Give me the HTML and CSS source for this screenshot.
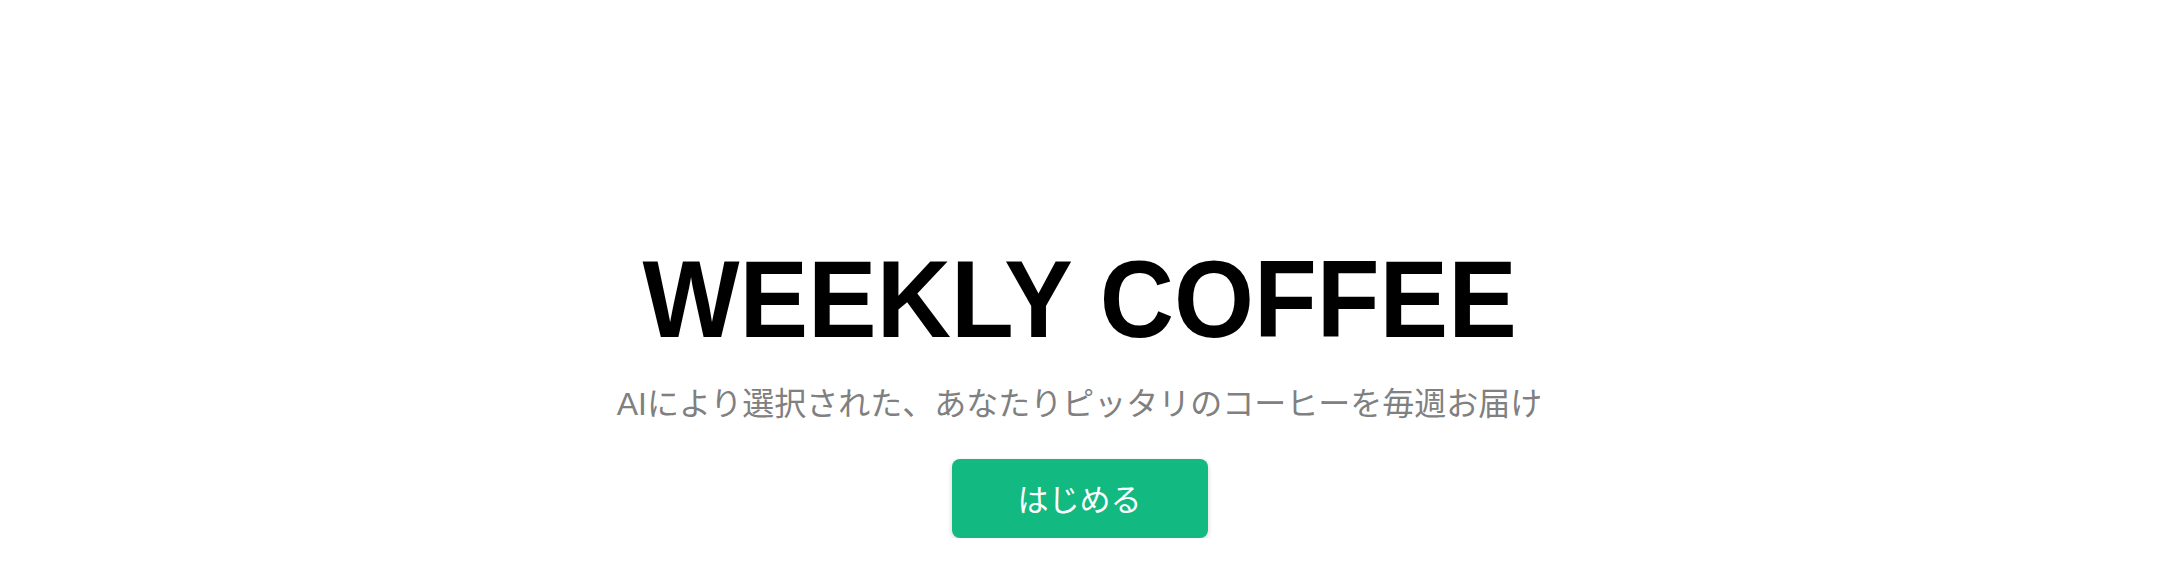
FILE: index.html
```html
<!DOCTYPE html>
<html lang="ja">
<head>
<meta charset="utf-8">
<title>WEEKLY COFFEE</title>
<link rel="stylesheet" href="styles.css">
</head>
<body>
<main class="hero">
  <h1 class="hero-title">WEEKLY COFFEE</h1>
  <p class="hero-sub">AIにより選択された、あなたりピッタリのコーヒーを毎週お届け</p>
  <button class="hero-btn" type="button">はじめる</button>
</main>
</body>
</html>
```

FILE: styles.css
```css
html, body {
  margin: 0;
  padding: 0;
  background: #ffffff;
}

body {
  font-family: "Liberation Sans", "Noto Sans CJK JP", sans-serif;
}

.hero {
  display: flex;
  flex-direction: column;
  align-items: center;
  padding-top: 233px;
}

.hero-title {
  margin: 0;
  font-family: "Liberation Sans", Arial, sans-serif;
  font-weight: 700;
  font-size: 110px;
  line-height: 132px;
  color: #000000;
  transform: scaleX(0.935);
  white-space: nowrap;
}

.hero-sub {
  margin: 15px 0 0;
  font-family: "Liberation Sans", "Noto Sans CJK JP", sans-serif;
  font-size: 32px;
  line-height: 48px;
  color: #808080;
  white-space: nowrap;
}

.hero-btn {
  margin-top: 31px;
  width: 256px;
  height: 79px;
  padding: 0;
  border: none;
  border-radius: 8px;
  background: #12b981;
  color: #ffffff;
  font-family: "Noto Sans CJK JP", sans-serif;
  font-size: 31px;
  line-height: 1.5;
  box-shadow: 0 2px 5px rgba(0, 0, 0, 0.18);
  cursor: pointer;
}
```
